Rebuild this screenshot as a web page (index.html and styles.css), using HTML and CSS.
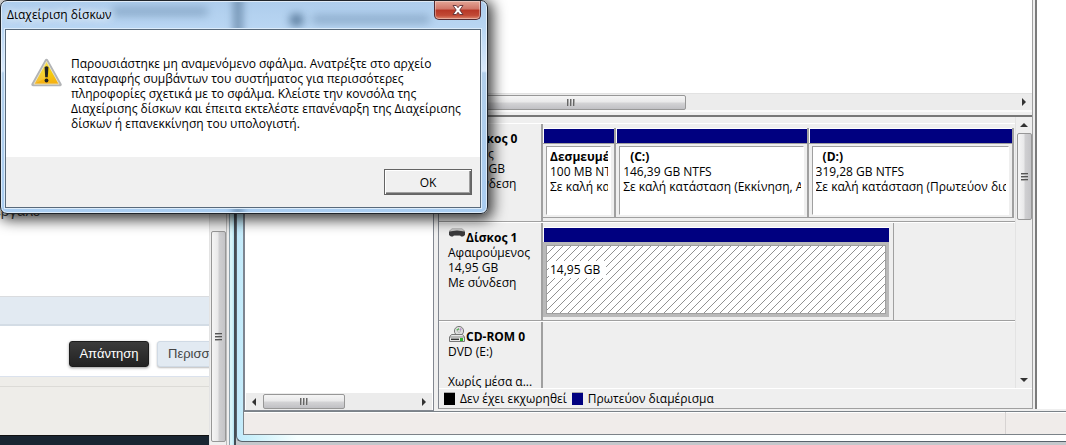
FILE: index.html
```html
<!DOCTYPE html>
<html lang="el">
<head>
<meta charset="utf-8">
<title>Διαχείριση δίσκων</title>
<link rel="stylesheet" href="styles.css">
</head>
<body>
<main class="desktop">
  <section class="browser">
    <div class="page">
      <div class="page-article"><span>εργαλε</span></div>
      <div class="page-band"></div>
      <div class="page-actions">
        <button class="reply" type="button">Απάντηση</button>
        <button class="more" type="button">Περισσότερα</button>
      </div>
      <div class="page-strip"></div>
      <div class="page-beige"></div>
      <div class="page-footer"></div>
    </div>
    <div class="vscroll browser-scroll"><div class="vthumb"><i class="grip-v"></i></div></div>
    <div class="browser-edge"></div>
  </section>

  <section class="console">
    <div class="console-body">
      <div class="tree">
        <div class="tree-items"></div>
        <div class="hscroll">
          <i class="arrow left"></i>
          <div class="track"><div class="hthumb tree-thumb"><i class="grip-h"></i></div></div>
          <i class="arrow right"></i>
        </div>
      </div>
      <div class="center">
        <div class="volume-list"></div>
        <div class="hscroll list-scroll">
          <div class="track"><div class="hthumb list-thumb"><i class="grip-h"></i></div></div>
          <i class="arrow right"></i>
        </div>
        <div class="splitter"></div>
        <div class="disk-area">
          <div class="disks">
            <div class="disk">
              <div class="disk-label">
                <b class="disk-name">Δίσκος 0</b>
                <span>Βασικός</span><span>465,76 GB</span><span>Με σύνδεση</span>
              </div>
              <div class="volumes">
                <div class="volume"><div class="bar"></div><div class="vol-box"><div class="vol-text"><b>Δεσμευμένο</b><span>100 MB NTFS</span><span>Σε καλή κατάσταση</span></div></div></div>
                <div class="volume"><div class="bar"></div><div class="vol-box"><div class="vol-text"><b class="letter">(C:)</b><span>146,39 GB NTFS</span><span>Σε καλή κατάσταση (Εκκίνηση, Αρχείο)</span></div></div></div>
                <div class="volume"><div class="bar"></div><div class="vol-box"><div class="vol-text"><b class="letter">(D:)</b><span>319,28 GB NTFS</span><span>Σε καλή κατάσταση (Πρωτεύον διαμέρισμα)</span></div></div></div>
              </div>
            </div>
            <div class="disk">
              <div class="disk-label">
                <b class="disk-name"><svg class="disk-icon" viewBox="0 0 18 16"><path d="M4 1.500h10l3 2.500v3.500l-2 1.500H3L1 7.500V4z" fill="#8a8a8a"/><path d="M4 1.500h10l2 2.500H2z" fill="#c4c4c4"/><path d="M1 5q8-3 16 0v3l-2 1.500h-2l-1-1.500H6L5 9.500H3L1 8z" fill="#3a3a3c"/></svg>Δίσκος 1</b>
                <span>Αφαιρούμενος</span><span>14,95 GB</span><span>Με σύνδεση</span>
              </div>
              <div class="volumes removable">
                <div class="volume-selected"><div class="bar"></div>
                  <div class="hatch-frame"><div class="hatch">
                    <svg class="hatch-fill" width="100%" height="100%"><defs><pattern id="hatch" width="8" height="8" patternUnits="userSpaceOnUse"><path d="M-1 9L9-1M-1 1L1-1M7 9L9 7" stroke="#858585" stroke-width="0.9"/></pattern></defs><rect width="100%" height="100%" fill="url(#hatch)"/></svg>
                    <span class="size">14,95 GB</span>
                  </div></div>
                </div>
              </div>
            </div>
            <div class="disk last">
              <div class="disk-label">
                <b class="disk-name"><svg class="disk-icon" viewBox="0 0 18 16"><circle cx="11" cy="5" r="4.600" fill="#ddd" stroke="#777"/><path d="M8 4l3-2v3z" fill="#49b54c"/><path d="M12 2l2 1-2 2z" fill="#b58fc9"/><circle cx="11" cy="5" r="1.300" fill="#fff" stroke="#888" stroke-width=".6"/><path d="M3.500 8.500h11l2 2.500v4.500H1.500V11z" fill="#e8e8e8" stroke="#777"/><path d="M2 11h14" stroke="#888"/><path d="M3 13.300h8" stroke="#333" stroke-width="1.400"/><rect x="12" y="12" width="3" height="3" fill="#2db52d"/></svg>CD-ROM 0</b>
                <span>DVD (E:)</span><span>&nbsp;</span><span>Χωρίς μέσα α...</span>
              </div>
              <div class="volumes none"></div>
            </div>
          </div>
          <div class="vscroll disk-scroll"><i class="arrow up"></i><div class="vthumb disk-thumb"><i class="grip-v"></i></div><i class="arrow down"></i></div>
        </div>
        <ul class="legend">
          <li><i class="swatch black"></i>Δεν έχει εκχωρηθεί</li>
          <li><i class="swatch navy"></i>Πρωτεύον διαμέρισμα</li>
        </ul>
      </div>
      <div class="actions-pane"></div>
    </div>
    <div class="status"><div></div><div></div></div>
  </section>

  <section class="dialog" role="alertdialog" aria-labelledby="dialog-title" aria-describedby="dialog-text">
    <div class="ghosts" aria-hidden="true"><i class="ghost ghost-text"></i><i class="ghost ghost-edge"></i><i class="ghost ghost-icon"></i><i class="ghost ghost-item"></i></div>
    <header class="titlebar">
      <h1 id="dialog-title">Διαχείριση δίσκων</h1>
      <button class="close" type="button" aria-label="Κλείσιμο"><svg viewBox="0 0 12 10"><path d="M1 .500h3.300L6 2.700 7.700.500H11L7.800 5 11 9.500H7.700L6 7.300 4.300 9.500H1L4.200 5z" fill="#fff" stroke="#5d3036" stroke-width=".9"/></svg></button>
    </header>
    <div class="dialog-client">
      <div class="message">
        <svg class="warning" viewBox="0 0 32 29"><defs><linearGradient id="amber" x2="0" y2="1"><stop offset="0" stop-color="#f7df45"/><stop offset=".5" stop-color="#f5cd0c"/><stop offset="1" stop-color="#f5ad13"/></linearGradient></defs><path d="M16 2L30 27H2z" fill="#bbb" stroke="#b2b4b6" stroke-width="3.400" stroke-linejoin="round"/><path d="M16 3L29 26.500H3z" fill="url(#amber)" stroke="#e6e1cb" stroke-width="1" stroke-linejoin="round"/><path d="M16 4L3.500 26L16 20z" fill="#fff" opacity=".15"/><path d="M14 9q2-2 4 0l-.7 10.500h-2.600z" fill="#222"/><circle cx="16" cy="22.700" r="2" fill="#222"/></svg>
        <p id="dialog-text">Παρουσιάστηκε μη αναμενόμενο σφάλμα. Ανατρέξτε στο αρχείο<br>καταγραφής συμβάντων του συστήματος για περισσότερες<br>πληροφορίες σχετικά με το σφάλμα. Κλείστε την κονσόλα της<br>Διαχείρισης δίσκων και έπειτα εκτελέστε επανέναρξη της Διαχείρισης<br>δίσκων ή επανεκκίνηση του υπολογιστή.</p>
      </div>
      <footer class="dialog-footer"><button class="ok" type="button">OK</button></footer>
    </div>
  </section>
</main>
</body>
</html>
```
FILE: styles.css
```css
* { box-sizing: border-box; }
body {
  margin: 0;
  font: 12px/15px "Open Sans", "Noto Sans", sans-serif;
  color: #000;
}
button { font: inherit; }
.desktop {
  position: relative;
  display: flex;
  height: 100vh;
  min-height: 440px;
  overflow: hidden;
  background: #c4c8cc;
}

/* Scroll bars */
.vscroll { display: flex; flex-direction: column; align-items: center; background: #efefef; border-left: 1px solid #e3e3e3; }
.vthumb, .hthumb { display: flex; align-items: center; justify-content: center; border: 1px solid #979797; border-radius: 2px; }
.vthumb { width: 15px; background: linear-gradient(90deg, #f5f5f5, #e8e8e9 48%, #d0d0d2 52%, #c4c4c7); }
.hthumb { height: 15px; background: linear-gradient(#f5f5f5, #e8e8e9 48%, #d4d4d6 52%, #c0c0c4); }
.grip-v { width: 7px; height: 8px; background: repeating-linear-gradient(#555 0 1px, #aaa 1px 2px, transparent 2px 3px); }
.grip-h { width: 8px; height: 7px; background: repeating-linear-gradient(90deg, #666 0 1px, #aaa 1px 2px, transparent 2px 3px); }
.hscroll { display: flex; align-items: center; height: 17px; background: #ececec; }
.track { flex: 1; }
.arrow { border: 4px solid transparent; }
.arrow.left { border-right-color: #333; margin: 0 7px 0 2px; }
.arrow.right { border-left-color: #333; margin: 0 2px 0 6px; }
.arrow.up { border-bottom-color: #333; }
.arrow.down { border-top-color: #333; margin-top: auto; }

/* Web page behind the console */
.browser { display: flex; flex: none; width: 236px; background: #fff; }
.page { display: flex; flex-direction: column; width: 209px; overflow: hidden; }
.page-article { height: 296px; padding-top: 202px; font: 15px/18px "Liberation Sans", sans-serif; color: #444; }
.page-article span { margin-left: -6px; }
.page-band { height: 30px; background: #e2eaf2; border-top: 1px solid #dadcdf; border-bottom: 2px solid #d3dce5; }
.page-actions { display: flex; gap: 8px; height: 51px; padding: 15px 0 0 69px; border-bottom: 1px solid #dbe2ed; }
.page-actions button { flex: none; height: 26px; padding: 0; border-radius: 3px; font: 13px/16px "Liberation Sans", sans-serif; }
.page-actions .reply { width: 80px; border: 1px solid #1c1c1c; color: #fff; background: linear-gradient(#3b3b3b, #222); box-shadow: 0 1px 3px #999; }
.page-actions .more { padding: 0 10px; border: 1px solid #d0dae5; color: #444; background: #e2eaf2; box-shadow: 0 1px 2px #bbb; }
.page-strip { height: 10px; background: #eeede9; border-bottom: 1px solid #dcdbd7; }
.page-beige { height: 49px; background: #eeede9; border-bottom: 1px solid #111; }
.page-footer { flex: 1; background: #192531; }
.browser-scroll { width: 17px; padding: 231px 0 3px; }
.browser-scroll .vthumb { flex: 1; }
.browser-edge { flex: 1; border-left: 1px solid #bbb; border-right: 2px solid #454c54; background: linear-gradient(90deg, #eee 0 2px, #8da1ac 2px 3px, #d8f5fa 3px 5px, #b0e0f0); }

/* Disk management console */
.console {
  display: flex;
  flex: 1;
  flex-direction: column;
  min-width: 0;
  margin-bottom: 3px;
  padding: 0 0 6px 6px;
  border: solid #59626b;
  border-width: 0 0 1px 1px;
  border-bottom-left-radius: 6px;
  background: linear-gradient(90deg, #c2e9fb, #c8effa 12px, #f6ffff 60px, #fff);
}
.console-body { display: flex; flex: 1; min-height: 0; border-left: 2px solid #7d8590; background: #efefef; }
.tree { display: flex; flex-direction: column; flex: none; width: 189px; border-right: 1px solid #828790; border-bottom: 1px solid #828790; background: #fff; }
.tree-items { flex: 1; }
.tree .hscroll { margin: 0 1px; }
.tree-thumb { width: 82px; }
.center { display: flex; flex-direction: column; flex: 1; min-width: 0; margin: 0 2px 2px 4px; border-left: 1px solid #828790; border-bottom: 1px solid #a0a0a0; border-right: 1px solid #a0a0a0; }
.volume-list { height: 93px; background: #fff; }
.list-scroll { border-top: 1px solid #e2e2e2; }
.list-thumb { width: calc(100% - 330px); padding-left: 17px; }
.splitter { height: 7px; border-top: 2px solid #fafafa; border-bottom: 2px solid #777; background: #efefef; }
.disk-area { display: flex; flex: 1; min-height: 0; }
.disks { flex: 1; min-width: 0; padding-top: 6px; overflow: hidden; }
.disk { display: flex; height: 99px; border-top: 1px solid #fff; border-bottom: 1px solid #a0a0a0; }
.disk.last { height: auto; border-bottom: 0; }
.disk-label { display: flex; flex-direction: column; flex: none; width: 104px; padding: 7px 0 0 9px; border-right: 2px solid #a0a0a0; white-space: nowrap; }
.disk-name { display: flex; align-items: center; padding-left: 18px; }
.disk-icon { width: 18px; height: 16px; margin: -5px 0 0 -18px; }
.volumes { display: grid; grid-template-columns: 73fr 192fr 205fr; flex: 1; min-width: 0; padding: 4px 1px 3px 0; }
.volume { display: flex; flex-direction: column; min-width: 0; border-right: 2px solid #a0a0a0; border-bottom: 1px solid #a0a0a0; }
.bar { height: 15px; border: solid #fff; border-width: 1px 0 0 1px; background: #000080; }
.vol-box { flex: 1; min-height: 0; padding: 2px 3px; border-top: 1px solid #a0a0a0; }
.vol-text { display: flex; flex-direction: column; height: 100%; padding: 2px 2px 0 3px; overflow: hidden; border: 1px solid #a0a0a0; border-right-color: #fff; border-bottom-color: #fff; background: #fff; white-space: nowrap; }
.vol-text b, .vol-text span { overflow: hidden; }
.vol-text .letter { padding-left: 7px; }
.volumes.removable { display: block; flex: none; width: 351px; padding: 4px 4px 3px 0; border-right: 1px solid #a0a0a0; }
.volume-selected { display: flex; flex-direction: column; height: 100%; }
.hatch-frame { flex: 1; padding: 3px; background: #b9b9b9; }
.hatch { position: relative; height: 100%; padding: 16px 2px; border: 1px solid #a0a0a0; background: #fff; }
.hatch-fill { position: absolute; inset: 0; }
.size { position: relative; padding: 0 6px 0 1px; background: #fff; }
.disk-scroll { width: 17px; padding: 2px 0 2px; }
.disk-thumb { height: 87px; margin-top: 6px; flex: none; }
.legend { display: flex; gap: 5px; height: 20px; margin: 0; padding: 2px 5px; list-style: none; border-top: 1px solid #fff; }
.legend li { display: flex; align-items: center; gap: 5px; }
.swatch { width: 11px; height: 13px; border-top: 1px solid #aaa; }
.black { background: #000; }
.navy { background: #000080; }
.actions-pane { flex: none; width: 31px; margin-bottom: 2px; border-left: 2px solid #7b7b7b; background: #fff; }
.status { display: grid; grid-template-columns: 1fr 61px; height: 24px; border: solid #7b8288; border-width: 1px 0 1px 1px; background: #f0ecea; box-shadow: inset 0 1px #fff; }
.status div + div { border-left: 1px solid #d7d3d2; }

/* Error dialog */
.dialog {
  position: absolute;
  top: 0;
  left: 0;
  display: flex;
  flex-direction: column;
  width: 488px;
  padding: 0 6px 5px 4px;
  border: 1px solid #20252b;
  border-radius: 7px;
  background: linear-gradient(#aecdec, #b9d6f3 28px, #d9e9fb 70px, #b2cfeb 72px, #a9cdf1);
  box-shadow: 2px 3px 14px 3px rgba(0, 0, 0, .75), inset 0 0 0 1px rgba(255, 255, 255, .6);
}
.ghosts { position: absolute; inset: 1px; overflow: hidden; }
.ghost { position: absolute; border-radius: 4px; filter: blur(4px); background: #456789; }
.ghost-text { left: 110px; top: 5px; width: 96px; height: 9px; opacity: .35; }
.ghost-edge { left: 232px; top: -10px; width: 8px; height: 240px; opacity: .65; }
.ghost-icon { left: 288px; top: 12px; width: 13px; height: 12px; opacity: .8; }
.ghost-item { left: 310px; top: 13px; width: 118px; height: 9px; opacity: .35; }
.titlebar { position: relative; display: flex; justify-content: space-between; height: 28px; }
.titlebar h1 { margin: 0; padding: 6px 2px; font-size: 12px; line-height: 15px; font-weight: 400; text-shadow: 0 0 8px #fff, 0 0 8px #fff; }
.close { display: grid; place-items: center; width: 47px; height: 19px; padding: 0; border: 1px solid #542a30; border-top: 0; border-radius: 0 0 5px 5px; background: linear-gradient(#e3a697, #cf7567 45%, #b73726 50%, #c14a36 80%, #de8870); box-shadow: inset 0 0 0 1px rgba(255, 255, 255, .35); }
.close svg { width: 12px; height: 10px; }
.dialog-client { position: relative; border: 1px solid #596a7b; box-shadow: 0 0 0 1px #dcecfb; background: #f0f0f0; }
.message { display: flex; gap: 9px; height: 127px; padding: 26px 0 0 25px; background: #fff; }
.warning { flex: none; width: 31px; height: 29px; margin-top: 2px; }
.message p { margin: 0; white-space: nowrap; }
.dialog-footer { display: flex; justify-content: flex-end; padding: 12px 8px; }
.ok { width: 88px; height: 26px; padding: 0; border: 1px solid #646464; background: #f0f0f0; color: #000; box-shadow: inset 1px 1px #fff, inset -1px -1px #696969, inset -2px -2px #a0a0a0; }
```
